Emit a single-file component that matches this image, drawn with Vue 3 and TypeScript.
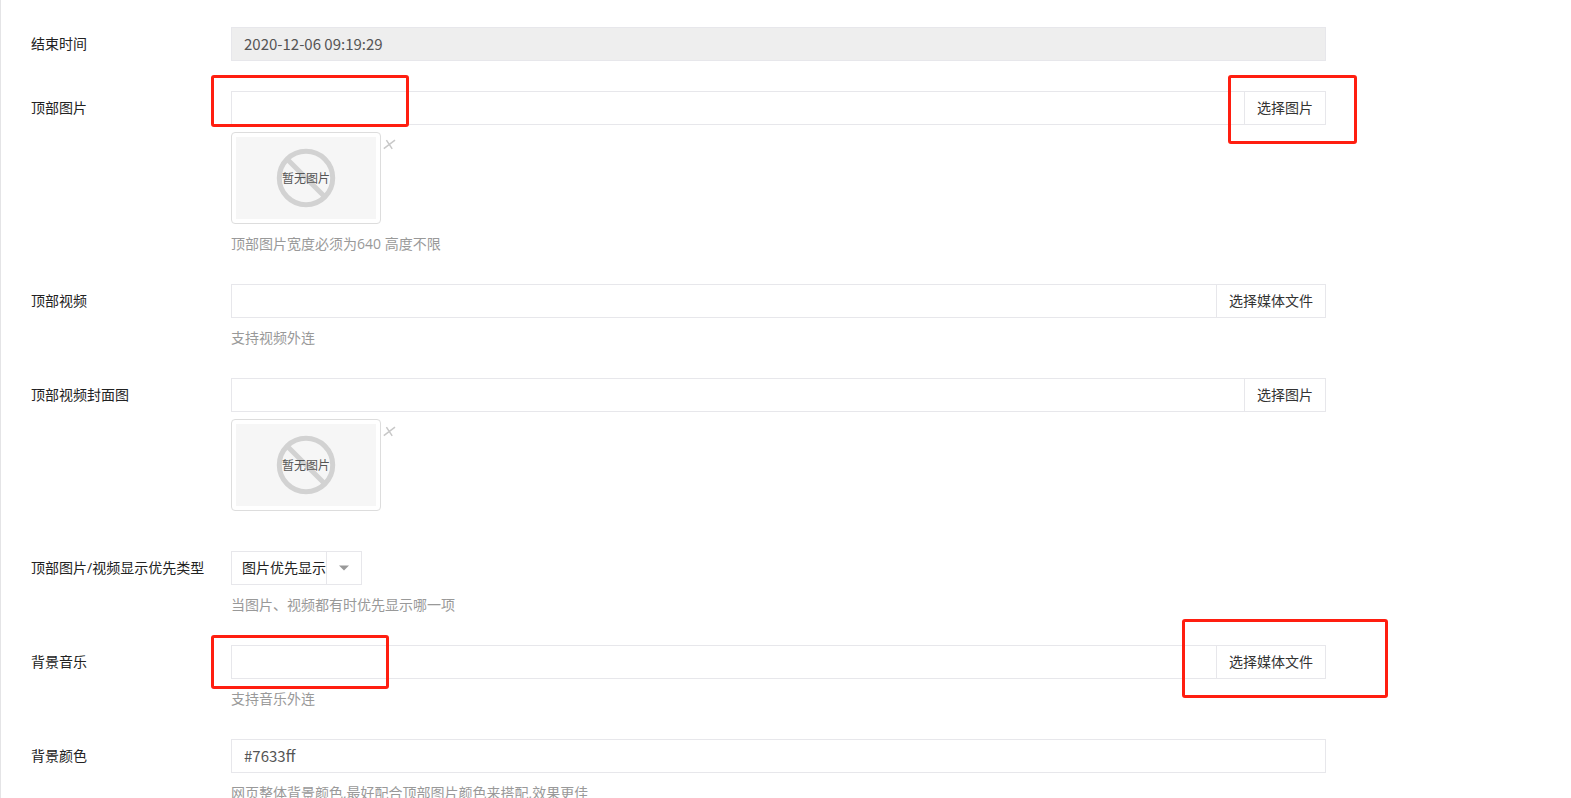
<script setup lang="ts">
import { ref } from 'vue'

type Mark = 'image' | 'music'

interface Field {
  id: string
  label: string
  kind: 'text' | 'picker' | 'select'
  value: string
  readonly?: boolean
  button?: string
  thumb?: boolean
  help?: string
  mark?: Mark
}

const fields = ref<Field[]>([
  { id: 'end-time', label: '结束时间', kind: 'text', value: '2020-12-06 09:19:29', readonly: true },
  { id: 'top-image', label: '顶部图片', kind: 'picker', value: '', button: '选择图片', thumb: true, help: '顶部图片宽度必须为640 高度不限', mark: 'image' },
  { id: 'top-video', label: '顶部视频', kind: 'picker', value: '', button: '选择媒体文件', help: '支持视频外连' },
  { id: 'video-cover', label: '顶部视频封面图', kind: 'picker', value: '', button: '选择图片', thumb: true, help: '' },
  { id: 'priority', label: '顶部图片/视频显示优先类型', kind: 'select', value: '图片优先显示', help: '当图片、视频都有时优先显示哪一项' },
  { id: 'music', label: '背景音乐', kind: 'picker', value: '', button: '选择媒体文件', help: '支持音乐外连', mark: 'music' },
  { id: 'bg-color', label: '背景颜色', kind: 'text', value: '#7633ff', help: '网页整体背景颜色,最好配合顶部图片颜色来搭配,效果更佳' },
])

const priorities = ['图片优先显示', '视频优先显示']
</script>

<template>
  <form class="page" @submit.prevent>
    <div v-for="field in fields" :key="field.id" class="row">
      <label class="label" :for="field.id">{{ field.label }}</label>
      <div class="control">
        <input
          v-if="field.kind === 'text'"
          :id="field.id"
          v-model="field.value"
          class="input"
          type="text"
          :readonly="field.readonly"
        />

        <div v-else-if="field.kind === 'picker'" class="group">
          <input :id="field.id" v-model="field.value" class="input" type="text" />
          <button class="pick" type="button">{{ field.button }}</button>
          <template v-if="field.mark">
            <span class="mark start" :class="field.mark"></span>
            <span class="mark end" :class="field.mark"></span>
          </template>
        </div>

        <div v-else class="select-box">
          <select :id="field.id" v-model="field.value" class="select">
            <option v-for="item in priorities" :key="item">{{ item }}</option>
          </select>
          <span class="arrow">
            <svg width="10" height="6" viewBox="0 0 10 6"><path d="M0 0.5h10L5 5.5z" fill="#999" /></svg>
          </span>
        </div>

        <div v-if="field.thumb" class="preview">
          <div class="thumb">
            <svg class="picture" viewBox="0 0 140 82">
              <rect width="140" height="82" fill="#f6f6f6" />
              <circle cx="70" cy="41" r="26.7" fill="none" stroke="#d2d2d2" stroke-width="5" />
              <path d="M51 22l38 38" stroke="#d2d2d2" stroke-width="5" />
              <text x="70" y="46" text-anchor="middle">暂无图片</text>
            </svg>
          </div>
          <button class="remove" type="button" aria-label="删除">
            <svg width="16" height="24" viewBox="0 0 16 24">
              <path d="M2.8 16.6L14 8.2M5.4 8.2l5.8 8.6" fill="none" stroke="#c8c8c8" stroke-width="1.5" />
            </svg>
          </button>
        </div>

        <p v-if="field.help !== undefined" class="help">{{ field.help }}</p>
      </div>
    </div>
  </form>
</template>

<style>
body {
  margin: 0;
  background: #fff;
}
</style>

<style scoped>
.page {
  box-sizing: border-box;
  min-height: 100vh;
  padding: 27px 0 0 30px;
  border-left: 1px solid #e4e4e6;
  display: flex;
  flex-direction: column;
  gap: 30px;
  font-family: "Open Sans", "Noto Sans CJK SC", sans-serif;
  font-size: 14px;
  line-height: 20px;
  color: #222;
}

.row {
  display: grid;
  grid-template-columns: 200px 1095fr 245fr;
}

.label {
  line-height: 34px;
  height: 34px;
  white-space: nowrap;
}

.control {
  min-width: 0;
}

.input {
  box-sizing: border-box;
  display: block;
  width: 100%;
  min-width: 0;
  height: 34px;
  padding: 0 12px 2px;
  border: 1px solid #e7e7eb;
  border-radius: 0;
  outline: 0;
  background: #fff;
  color: #555;
  font: 15px "Noto Sans CJK SC", sans-serif;
}

.input[readonly] {
  background: #eee;
}

.group {
  position: relative;
  display: flex;
}

.group .input {
  flex: 1;
  border-right: 0;
}

.pick {
  height: 34px;
  padding: 0 12px;
  border: 1px solid #e7e7eb;
  background: #fff;
  color: #333;
  font: inherit;
  white-space: nowrap;
}

.mark {
  position: absolute;
  box-sizing: border-box;
  border: 3px solid #ff1e10;
  border-radius: 3px;
  pointer-events: none;
}

.mark.start {
  left: -20px;
}

.mark.start.image {
  top: -16px;
  width: 198px;
  height: 52px;
}

.mark.end.image {
  top: -16px;
  right: -31px;
  width: 129px;
  height: 69px;
}

.mark.start.music {
  top: -10px;
  width: 178px;
  height: 54px;
}

.mark.end.music {
  top: -26px;
  right: -62px;
  width: 206px;
  height: 79px;
}

.select-box {
  position: relative;
  width: 131px;
}

.select {
  box-sizing: border-box;
  display: block;
  width: 100%;
  height: 34px;
  padding: 0 0 0 10px;
  border: 1px solid #e7e7eb;
  border-radius: 0;
  outline: 0;
  appearance: none;
  background: #fff;
  color: #222;
  font: inherit;
}

.arrow {
  position: absolute;
  top: 1px;
  bottom: 1px;
  right: 1px;
  width: 34px;
  display: flex;
  align-items: center;
  justify-content: center;
  border-left: 1px solid #e7e7eb;
  pointer-events: none;
}

.preview {
  display: flex;
  align-items: flex-start;
  margin-top: 7px;
}

.thumb {
  box-sizing: border-box;
  width: 150px;
  height: 92px;
  padding: 4px;
  border: 1px solid #ddd;
  border-radius: 4px;
}

.picture {
  display: block;
  width: 100%;
}

.picture text {
  font-size: 12px;
  fill: #555;
}

.remove {
  display: block;
  padding: 0;
  border: 0;
  background: none;
}

.remove svg {
  display: block;
}

.help {
  margin: 10px 0 0;
  color: #999;
}
</style>
